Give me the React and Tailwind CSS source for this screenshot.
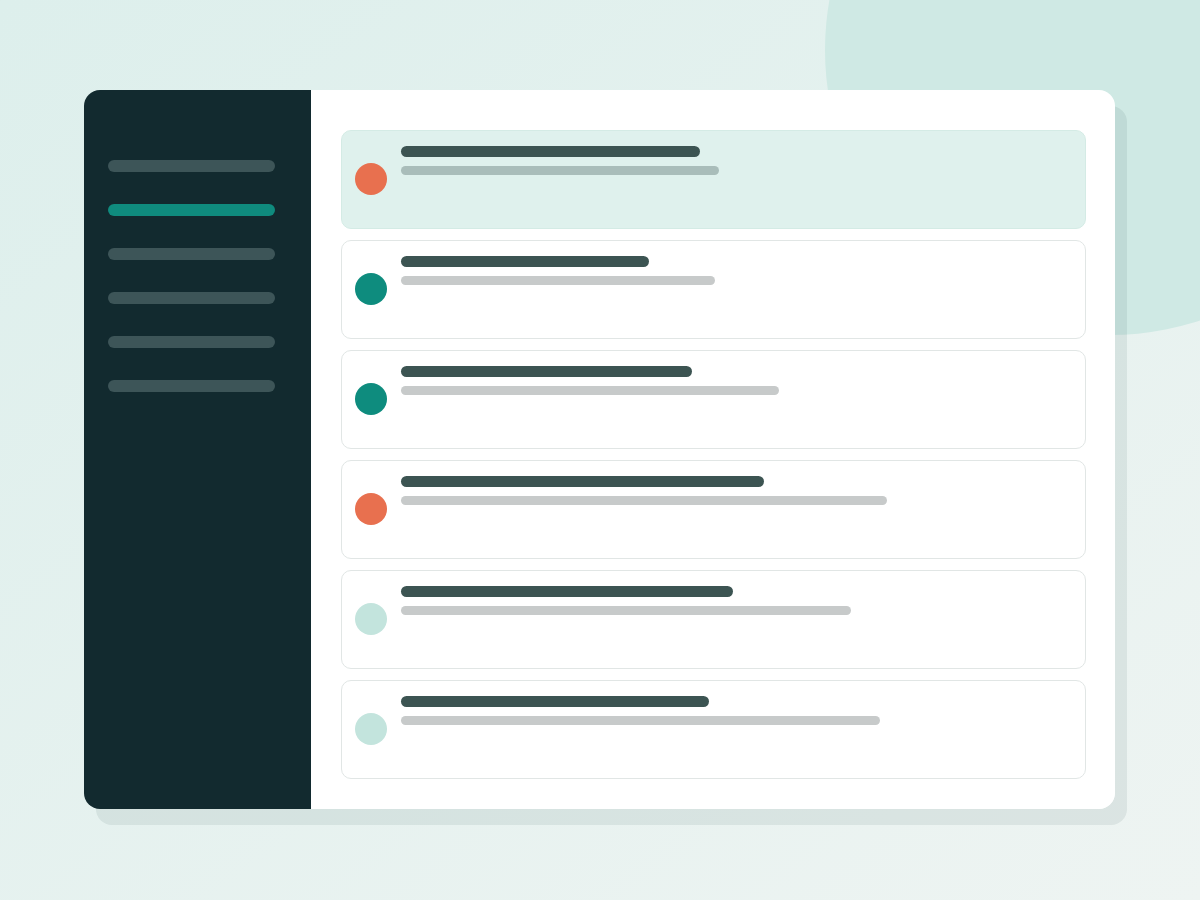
const navItems = [false, true, false, false, false, false]

const rows = [
  { dot: 'bg-[#e8704f]', title: 299, sub: 318, active: true },
  { dot: 'bg-[#0e8c7e]', title: 248, sub: 314 },
  { dot: 'bg-[#0e8c7e]', title: 291, sub: 378 },
  { dot: 'bg-[#e8704f]', title: 363, sub: 486 },
  { dot: 'bg-[#c3e4dd]', title: 332, sub: 450 },
  { dot: 'bg-[#c3e4dd]', title: 308, sub: 479 },
]

const Row = ({ dot, title, sub, active }) => (
  <div
    className={
      'flex items-start gap-[14px] h-[99px] px-[13px] rounded-[10px] border ' +
      (active ? 'bg-[#dff1ed] border-[#d4ebe5]' : 'bg-white border-[#e1e6e5]')
    }
  >
    <div className={'w-8 h-8 rounded-full mt-[32px] shrink-0 ' + dot} />
    <div className="flex flex-col gap-[9px] pt-[15px]">
      <div className="h-[11px] rounded-full bg-[#3c5452]" style={{ width: title }} />
      <div
        className={'h-[9px] rounded-full ' + (active ? 'bg-[#a9bdba]' : 'bg-[#c7caca]')}
        style={{ width: sub }}
      />
    </div>
  </div>
)

export default function App() {
  return (
    <div className="relative w-full h-[900px] overflow-hidden bg-gradient-to-br from-[#ddefec] to-[#eef4f2] flex items-start pt-[90px] pl-[84px] font-['Inter',sans-serif]">
      {/* background blob */}
      <div className="absolute left-[825px] top-[-235px] w-[570px] h-[570px] rounded-full bg-[#cfe9e4]" />

      <div className="relative flex w-[1031px] h-[719px] rounded-2xl overflow-hidden shadow-[12px_16px_0_rgba(10,50,50,0.08)]">
        {/* Sidebar */}
        <aside className="w-[227px] shrink-0 bg-[#122a2f] pl-6 pt-[70px] flex flex-col gap-8">
          {navItems.map((on, i) => (
            <div
              key={i}
              className={'w-[167px] h-3 rounded-full ' + (on ? 'bg-[#0f8b7e]' : 'bg-[#3d5558]')}
            />
          ))}
        </aside>

        {/* Main */}
        <main className="flex-1 bg-white pt-10 pl-[30px] pr-[29px] flex flex-col gap-[11px]">
          {rows.map((r, i) => (
            <Row key={i} {...r} />
          ))}
        </main>
      </div>
    </div>
  )
}
